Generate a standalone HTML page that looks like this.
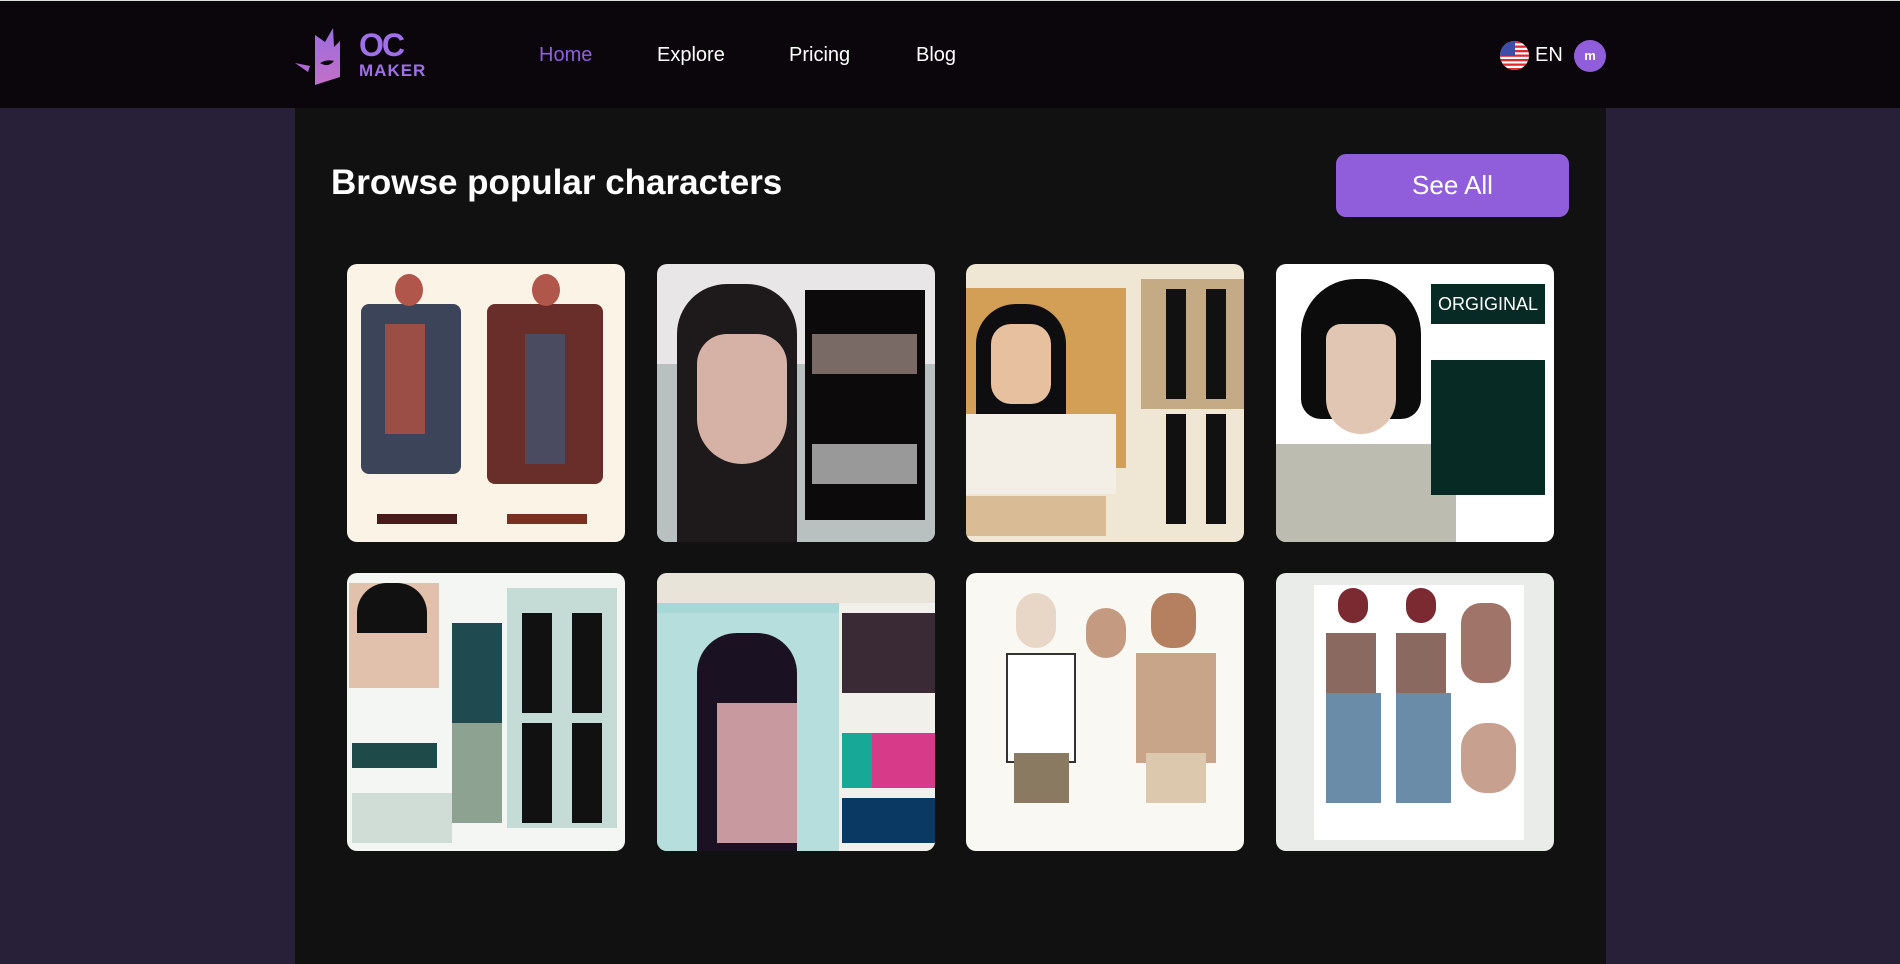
<!DOCTYPE html>
<html><head><meta charset="utf-8"><style>
*{margin:0;padding:0;box-sizing:border-box}
body{width:1900px;height:964px;background:#282039;font-family:"Liberation Sans",sans-serif;overflow:hidden;position:relative}
.top{position:absolute;left:0;top:0;width:1900px;height:1px;background:#ddd}
header{position:absolute;left:0;top:1px;width:1900px;height:107px;background:#0a060b}
.nav{position:absolute;top:43px;font-size:20px;color:#fff}
main{position:absolute;left:295px;top:108px;width:1311px;height:856px;background:#111111}
h1{position:absolute;left:36px;top:55px;font-size:35px;color:#fff;font-weight:bold}
.btn{position:absolute;left:1041px;top:46px;width:233px;height:63px;background:#915edb;border-radius:10px;color:#fff;font-size:26px;text-align:center;line-height:63px}
.card{position:absolute;width:278px;height:278px;border-radius:10px;overflow:hidden}
.card div{position:absolute}
</style></head><body>
<div class="top"></div>
<header>
<svg style="position:absolute;left:293px;top:24px" width="56" height="62" viewBox="0 0 56 62">
<defs><linearGradient id="g" x1="0" y1="0" x2="0" y2="1"><stop offset="0" stop-color="#9a6ee0"/><stop offset="1" stop-color="#c46fc8"/></linearGradient></defs>
<path d="M22 10 L22 60 L47 52 L47 16 L41 22 L40 3 L32 17 Z" fill="url(#g)"/>
<path d="M2 38 L17 41 L15 47 Z" fill="#b06ad4"/>
<path d="M27 38 Q34 34 41 36 Q35 43 27 38Z" fill="#0a060b"/>
</svg>
<div style="position:absolute;left:359px;top:30px;color:#a070e8;font-weight:bold;font-size:32px;line-height:28px;letter-spacing:-2px">OC</div>
<div style="position:absolute;left:359px;top:61px;color:#a070e8;font-weight:bold;font-size:17px;line-height:17px;letter-spacing:1px">MAKER</div>
<div class="nav" style="left:539px;color:#905ee0">Home</div>
<div class="nav" style="left:657px">Explore</div>
<div class="nav" style="left:789px">Pricing</div>
<div class="nav" style="left:916px">Blog</div>
<svg style="position:absolute;left:1500px;top:40px" width="29" height="29" viewBox="0 0 29 29"><clipPath id="c"><circle cx="14.5" cy="14.5" r="14.5"/></clipPath><g clip-path="url(#c)"><rect width="29" height="29" fill="#fff"/><g fill="#e0282e"><rect y="0" width="29" height="2.3"/><rect y="4.5" width="29" height="2.3"/><rect y="9" width="29" height="2.3"/><rect y="13.5" width="29" height="2.3"/><rect y="18" width="29" height="2.3"/><rect y="22.5" width="29" height="2.3"/><rect y="27" width="29" height="2.3"/></g><rect width="15" height="15" fill="#3d4ea8"/></g></svg>
<div style="position:absolute;left:1535px;top:43px;color:#fff;font-size:20px">EN</div>
<div style="position:absolute;left:1574px;top:39px;width:32px;height:32px;border-radius:50%;background:#915edb;color:#fff;font-weight:bold;font-size:13px;text-align:center;line-height:31px">m</div>
</header>
<main>
<h1>Browse popular characters</h1>
<div class="btn">See All</div>
</main>

<div class="card" style="left:347px;top:264px;background:#fbf3e6">
<div style="left:14px;top:40px;width:100px;height:170px;background:#3c4459;border-radius:8px"></div>
<div style="left:38px;top:60px;width:40px;height:110px;background:#9a4e45"></div>
<div style="left:140px;top:40px;width:116px;height:180px;background:#6a2e2a;border-radius:8px"></div>
<div style="left:178px;top:70px;width:40px;height:130px;background:#4a4a60"></div>
<div style="left:48px;top:10px;width:28px;height:32px;background:#b0564a;border-radius:50%"></div>
<div style="left:185px;top:10px;width:28px;height:32px;background:#b0564a;border-radius:50%"></div>
<div style="left:30px;top:250px;width:80px;height:10px;background:#4a1a1a"></div>
<div style="left:160px;top:250px;width:80px;height:10px;background:#7a3020"></div>
</div>
<div class="card" style="left:657px;top:264px;background:#e8e6e6">
<div style="left:0;top:100px;width:278px;height:178px;background:#b8c0c0"></div>
<div style="left:20px;top:20px;width:120px;height:258px;background:#1e1a1c;border-radius:50px 50px 0 0"></div>
<div style="left:40px;top:70px;width:90px;height:130px;background:#d6b2a6;border-radius:30px 30px 45px 45px"></div>
<div style="left:148px;top:26px;width:120px;height:230px;background:#0c0a0a"></div>
<div style="left:155px;top:70px;width:105px;height:40px;background:#7a6a66"></div>
<div style="left:155px;top:180px;width:105px;height:40px;background:#999"></div>
</div>
<div class="card" style="left:966px;top:264px;background:#efe6d4">
<div style="left:0;top:24px;width:160px;height:180px;background:#d39e55"></div>
<div style="left:10px;top:40px;width:90px;height:140px;background:#0e0e10;border-radius:40px 40px 0 0"></div>
<div style="left:25px;top:60px;width:60px;height:80px;background:#e7c0a0;border-radius:20px"></div>
<div style="left:0;top:150px;width:150px;height:80px;background:#f4efe6"></div>
<div style="left:175px;top:15px;width:103px;height:130px;background:#c5aa86"></div>
<div style="left:200px;top:25px;width:20px;height:110px;background:#111"></div>
<div style="left:240px;top:25px;width:20px;height:110px;background:#111"></div>
<div style="left:200px;top:150px;width:20px;height:110px;background:#111"></div>
<div style="left:240px;top:150px;width:20px;height:110px;background:#111"></div>
<div style="left:0;top:232px;width:140px;height:40px;background:#c9a06a;opacity:.6"></div>
</div>
<div class="card" style="left:1276px;top:264px;background:#fff">
<div style="left:0;top:180px;width:180px;height:98px;background:#bcbcb0"></div>
<div style="left:25px;top:15px;width:120px;height:140px;background:#0c0c0c;border-radius:55px 55px 20px 20px"></div>
<div style="left:50px;top:60px;width:70px;height:110px;background:#e2c6b4;border-radius:15px 15px 35px 35px"></div>
<div style="left:155px;top:20px;width:114px;height:40px;background:#082a24;color:#fff;font-size:18px;text-align:center;line-height:40px">ORGIGINAL</div>
<div style="left:155px;top:96px;width:114px;height:135px;background:#082a24"></div>
</div>

<div class="card" style="left:347px;top:573px;background:#f4f6f4">
<div style="left:2px;top:10px;width:90px;height:105px;background:#e2c1ac"></div>
<div style="left:10px;top:10px;width:70px;height:50px;background:#111;border-radius:30px 30px 0 0"></div>
<div style="left:105px;top:50px;width:50px;height:100px;background:#1f4a50"></div>
<div style="left:105px;top:150px;width:50px;height:100px;background:#8ea292"></div>
<div style="left:160px;top:15px;width:110px;height:240px;background:#c5dbd6"></div>
<div style="left:175px;top:40px;width:30px;height:100px;background:#111"></div>
<div style="left:225px;top:40px;width:30px;height:100px;background:#111"></div>
<div style="left:175px;top:150px;width:30px;height:100px;background:#111"></div>
<div style="left:225px;top:150px;width:30px;height:100px;background:#111"></div>
<div style="left:5px;top:170px;width:85px;height:25px;background:#1e4a4a"></div>
<div style="left:5px;top:220px;width:100px;height:50px;background:#d0ddd6"></div>
</div>
<div class="card" style="left:657px;top:573px;background:#a5d8d6">
<div style="left:0;top:0;width:278px;height:30px;background:#e8e4da"></div>
<div style="left:0;top:40px;width:182px;height:238px;background:#b6dedc"></div>
<div style="left:40px;top:60px;width:100px;height:218px;background:#1a1222;border-radius:40px 40px 0 0"></div>
<div style="left:60px;top:130px;width:80px;height:140px;background:#c89aa0"></div>
<div style="left:182px;top:30px;width:96px;height:248px;background:#f2f0ea"></div>
<div style="left:185px;top:40px;width:93px;height:80px;background:#3a2a36"></div>
<div style="left:185px;top:160px;width:93px;height:55px;background:#d83a8a"></div>
<div style="left:185px;top:160px;width:30px;height:55px;background:#18a898"></div>
<div style="left:185px;top:225px;width:93px;height:45px;background:#0a3a64"></div>
</div>
<div class="card" style="left:966px;top:573px;background:#f9f8f2">
<div style="left:40px;top:80px;width:70px;height:110px;background:#fff;border:2px solid #333"></div>
<div style="left:48px;top:180px;width:55px;height:50px;background:#8a7a62"></div>
<div style="left:50px;top:20px;width:40px;height:55px;background:#e8d6c6;border-radius:20px"></div>
<div style="left:120px;top:35px;width:40px;height:50px;background:#c49a80;border-radius:20px"></div>
<div style="left:170px;top:80px;width:80px;height:110px;background:#c8a588"></div>
<div style="left:180px;top:180px;width:60px;height:50px;background:#dcc8ac"></div>
<div style="left:185px;top:20px;width:45px;height:55px;background:#b48060;border-radius:20px"></div>
</div>
<div class="card" style="left:1276px;top:573px;background:#e9ece9">
<div style="left:38px;top:12px;width:210px;height:255px;background:#fff"></div>
<div style="left:50px;top:60px;width:50px;height:60px;background:#8a6a60"></div>
<div style="left:50px;top:120px;width:55px;height:110px;background:#6a8ca8"></div>
<div style="left:120px;top:60px;width:50px;height:60px;background:#8a6a60"></div>
<div style="left:120px;top:120px;width:55px;height:110px;background:#6a8ca8"></div>
<div style="left:185px;top:30px;width:50px;height:80px;background:#a07468;border-radius:20px"></div>
<div style="left:185px;top:150px;width:55px;height:70px;background:#c8a090;border-radius:25px"></div>
<div style="left:62px;top:15px;width:30px;height:35px;background:#7a2a30;border-radius:15px"></div>
<div style="left:130px;top:15px;width:30px;height:35px;background:#7a2a30;border-radius:15px"></div>
</div>
</body></html>
